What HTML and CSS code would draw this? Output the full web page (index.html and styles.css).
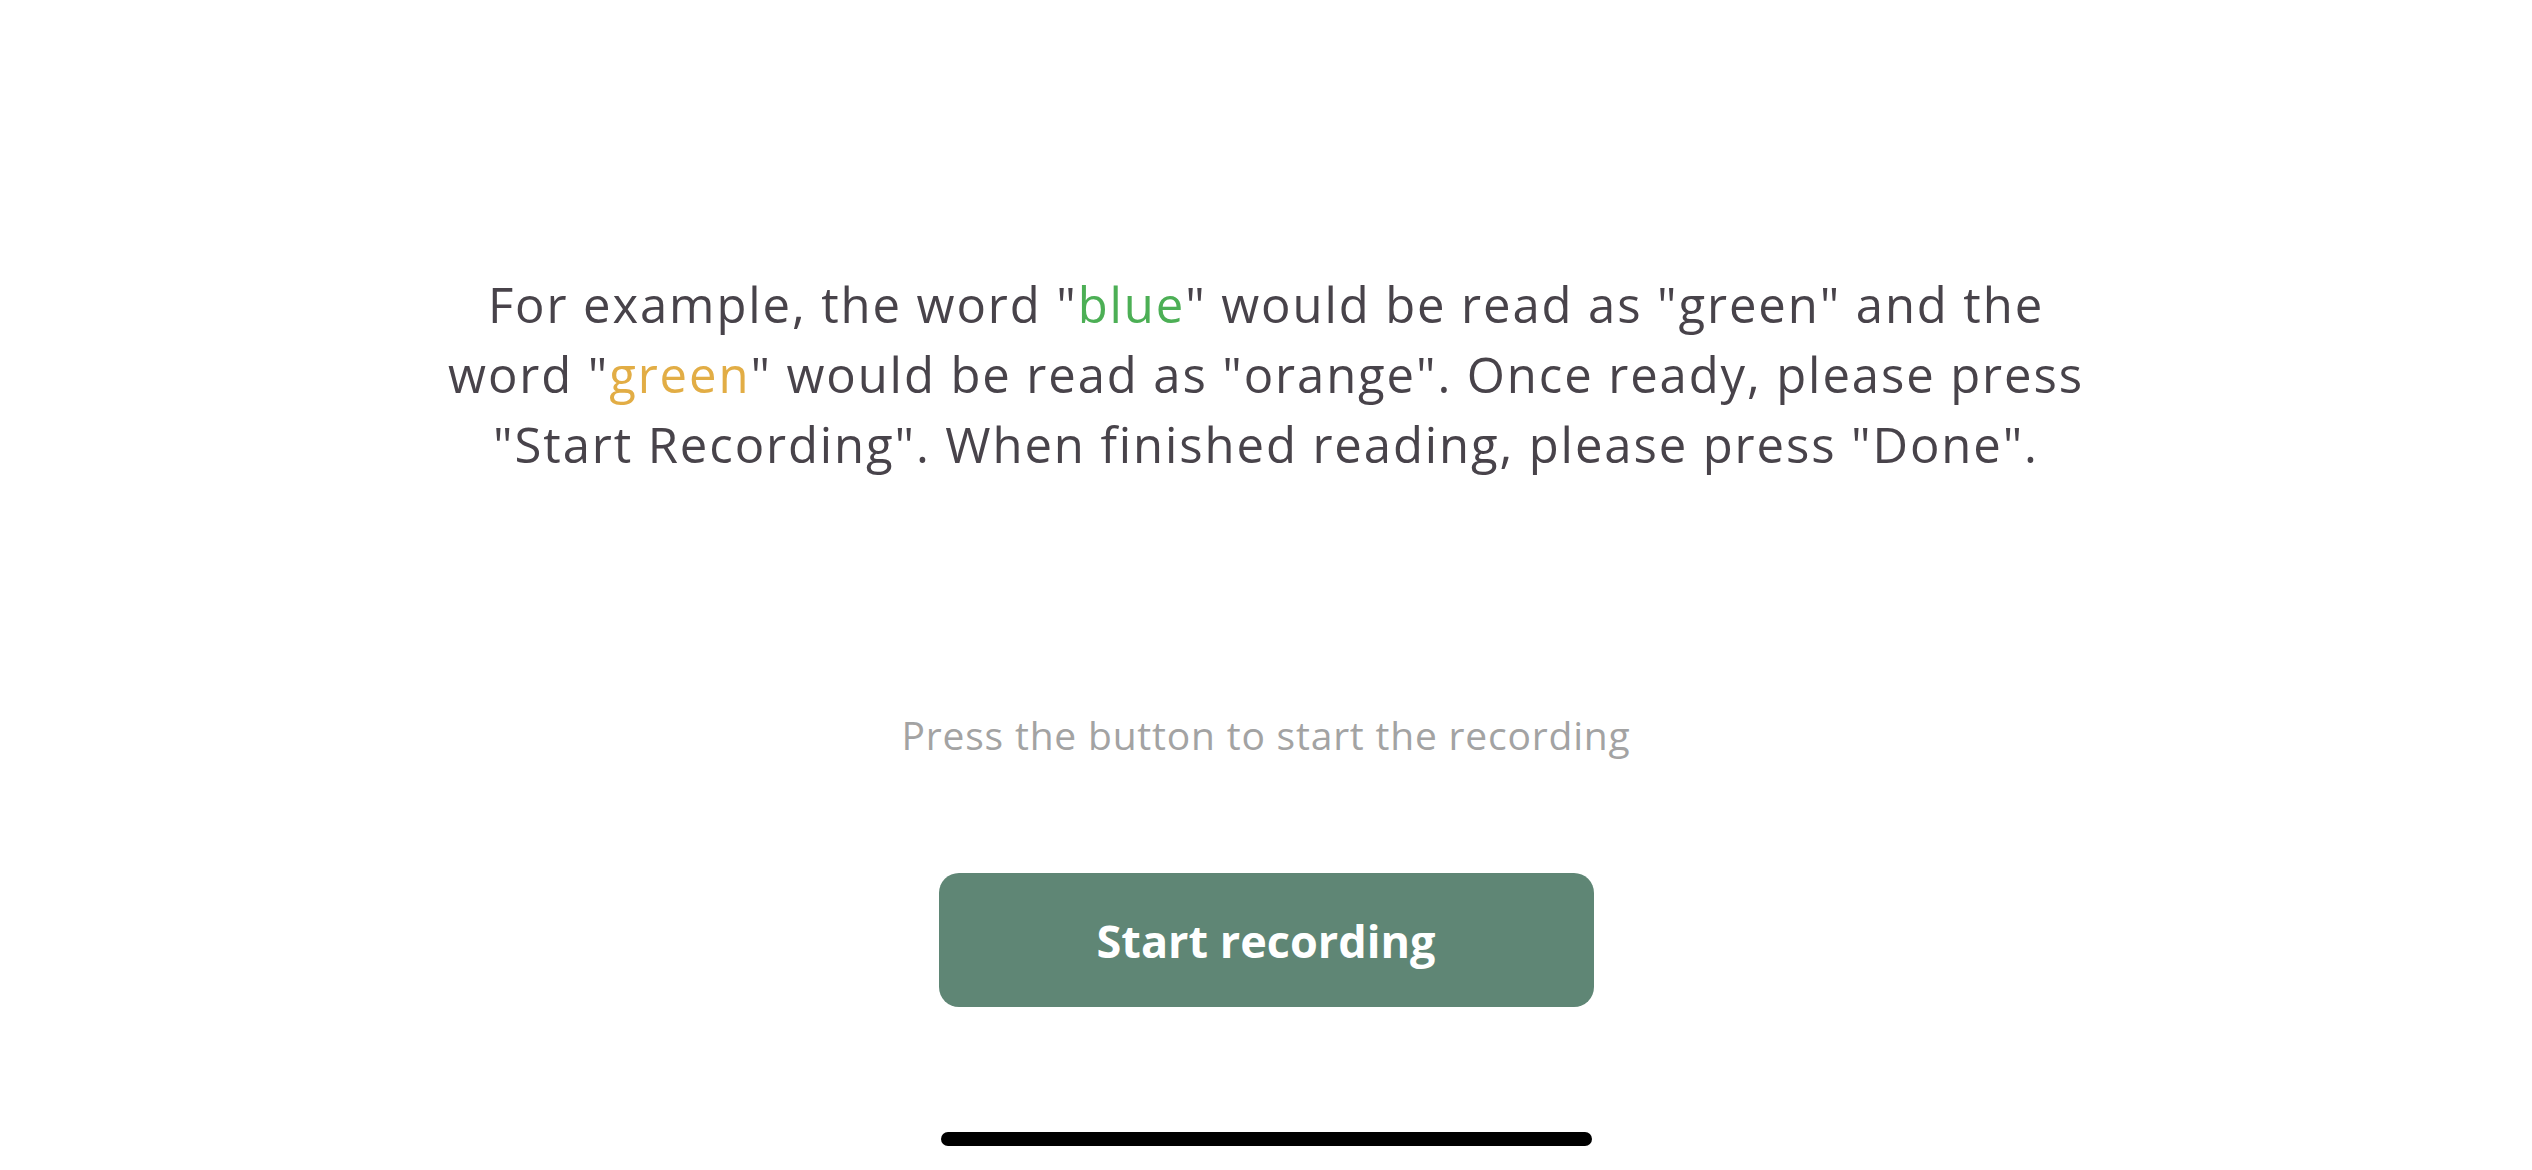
FILE: index.html
```html
<!DOCTYPE html>
<html lang="en">
<head>
<meta charset="utf-8">
<title>Recording</title>
<link rel="stylesheet" href="styles.css">
</head>
<body>
<main class="screen">
  <p class="instructions">For example, the word "<span class="c-green">blue</span>" would be read as "green" and the<br>word "<span class="c-orange">green</span>" would be read as "orange". Once ready, please press<br>"Start Recording". When finished reading, please press "Done".</p>
  <p class="hint">Press the button to start the recording</p>
  <button class="record-btn" type="button">Start recording</button>
  <div class="home-indicator"></div>
</main>
</body>
</html>
```
FILE: styles.css
```css
html, body {
  margin: 0;
  padding: 0;
  background: #ffffff;
}
body {
  width: 2532px;
  height: 1170px;
  overflow: hidden;
  font-family: "Open Sans", "Liberation Sans", sans-serif;
}
.screen {
  display: flex;
  flex-direction: column;
  align-items: center;
  padding-top: 269px;
  box-sizing: border-box;
  height: 1170px;
}
.instructions {
  margin: 0;
  font-size: 49px;
  font-weight: 500;
  letter-spacing: 1.9px;
  line-height: 70px;
  color: #48434a;
  text-align: center;
}
.c-green { color: #4caf55; }
.c-orange { color: #e2ad45; }
.hint {
  margin: 232px 0 0;
  font-size: 39px;
  letter-spacing: 0.8px;
  line-height: 48px;
  color: #a3a3a3;
}
.record-btn {
  margin-top: 114px;
  width: 655px;
  height: 134px;
  border: none;
  border-radius: 20px;
  background: #5f8675;
  color: #ffffff;
  font-family: "Open Sans", "Liberation Sans", sans-serif;
  font-weight: bold;
  font-size: 45px;
  padding: 0;
}
.home-indicator {
  margin-top: 125px;
  width: 651px;
  height: 14px;
  border-radius: 7px;
  background: #000000;
}
```
